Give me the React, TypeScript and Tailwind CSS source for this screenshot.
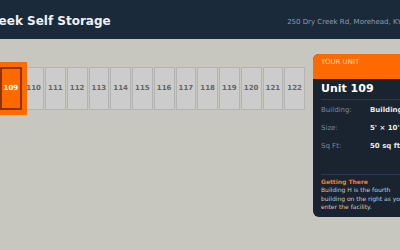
import React from "react";

const units = [107,108,109,110,111,112,113,114,115,116,117,118,119,120,121,122];

export default function App() {
  return (
    <div className="w-[400px] h-[250px] overflow-hidden bg-[#c8c7bf] flex justify-center" style={{ fontFamily: '"DejaVu Sans", sans-serif' }}>
      <div className="w-[520px] shrink-0 flex flex-col">
        <header className="h-[39px] bg-[#1b2a3b] flex items-center justify-between px-4">
          <div className="text-[12px] font-bold text-[#eef1f4] pt-[3px]">Dry Creek Self Storage</div>
          <div className="text-[7px] text-[#8d9aab] pt-[6px] pr-[18px]">250 Dry Creek Rd, Morehead, KY 40351</div>
        </header>
        <main className="flex items-start gap-2 px-4 pt-[15px]">
          <div className="flex-1 flex gap-px pt-[13px]">
            {units.map((u) => (
              u === 109 ? (
                <div key={u} className="flex-1 h-[43px] relative z-10 bg-[#ff6a00] border-2 border-[#8f3400] shadow-[0_0_0_5px_#ff6a00] flex items-center justify-center text-[7px] font-bold text-white">
                  {u}
                </div>
              ) : (
                <div key={u} className="flex-1 h-[43px] bg-[#cccccc] border border-[#b3b3b3] flex items-center justify-center text-[7px] font-bold text-[#666666]">
                  {u}
                </div>
              )
            ))}
          </div>
          <aside className="w-[131px] rounded-[6px] overflow-hidden bg-[#1a2430]">
            <div className="h-[25px] bg-[#ff6a00] px-2 pt-[3px] text-[7px] text-[#ffd6b3]">YOUR UNIT</div>
            <div className="px-2">
              <div className="pt-[2px] pb-[2px] leading-[16px] border-b border-[#2c3a4a] text-[11px] font-bold text-white">Unit 109</div>
              <div className="pt-[5px] flex flex-col gap-[7px] text-[7px]">
                <div className="flex h-[11px] items-center"><span className="w-[49px] text-[#7d8896]">Building:</span><span className="text-[#e6e9ec] font-semibold">Building H</span></div>
                <div className="flex h-[11px] items-center"><span className="w-[49px] text-[#7d8896]">Size:</span><span className="text-[#e6e9ec] font-semibold">5' × 10'</span></div>
                <div className="flex h-[11px] items-center"><span className="w-[49px] text-[#7d8896]">Sq Ft:</span><span className="text-[#e6e9ec] font-semibold">50 sq ft</span></div>
              </div>
              <div className="mt-[22px] border-t border-[#2c3a4a] pt-[2px] pb-[5px]">
                <div className="text-[6px] leading-[9px] font-bold text-[#ff7a1a]">Getting There</div>
                <p className="max-w-[90px] text-[6px] leading-[8.7px] text-[#c3cad2]">Building H is the fourth building on the right as you enter the facility.</p>
              </div>
            </div>
          </aside>
        </main>
      </div>
    </div>
  );
}
